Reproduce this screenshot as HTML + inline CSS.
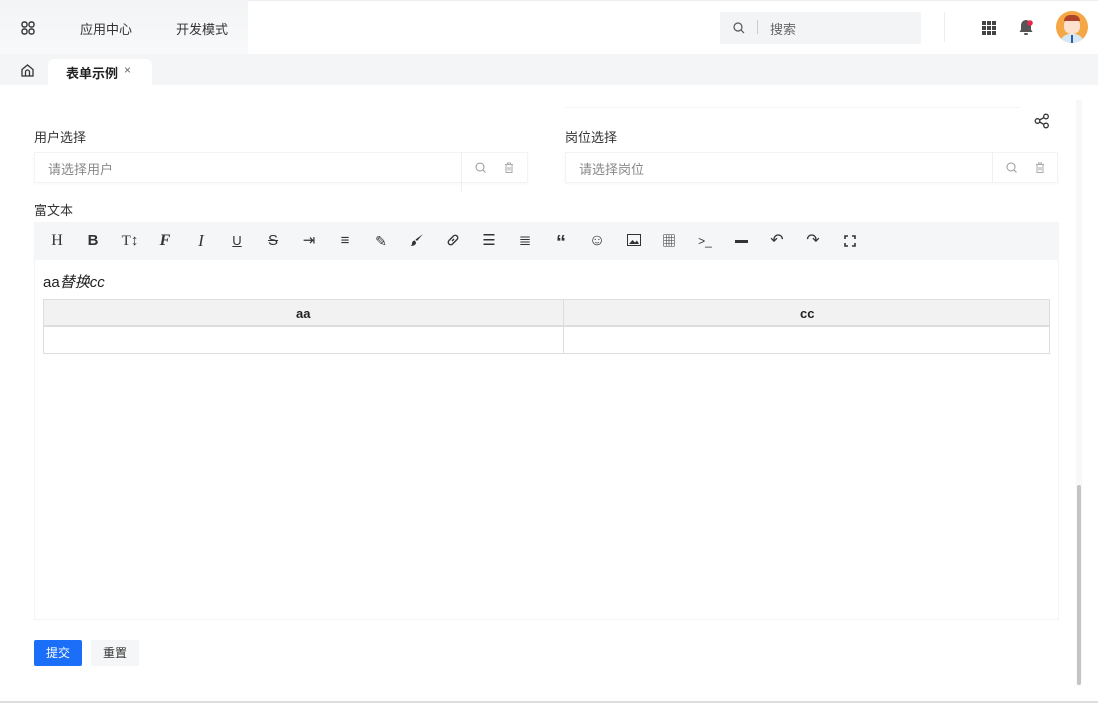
<!DOCTYPE html>
<html><head><meta charset="utf-8"><style>
*{box-sizing:border-box;margin:0;padding:0}
body{width:1098px;height:703px;overflow:hidden;background:#fff;font-family:"Liberation Sans","Noto Sans CJK SC",sans-serif;color:#333;position:relative}
.a{position:absolute}
.t{font-size:13px;color:#333}
.tb{position:absolute;top:232px;width:20px;text-align:center;font-size:14px;color:#333;line-height:18px}
</style></head><body>
<div class="a" style="left:0;top:0;width:1098px;height:54px;background:#fff;border-top:1px solid #eee"></div>
<div class="a" style="left:0;top:0;width:248px;height:54px;background:linear-gradient(#f3f4f5,#f8f9fa)"></div>
<svg class="a" style="left:21px;top:21px" width="14" height="14" viewBox="0 0 14 14" fill="none" stroke="#333" stroke-width="1.4"><rect x="1" y="1" width="5" height="5" rx="2"/><rect x="8" y="1" width="5" height="5" rx="2"/><rect x="1" y="8" width="5" height="5" rx="2"/><rect x="8" y="8" width="5" height="5" rx="2"/></svg>
<div class="a t" style="left:80px;top:19px">应用中心</div>
<div class="a t" style="left:176px;top:19px">开发模式</div>
<div class="a" style="left:720px;top:12px;width:201px;height:32px;background:#f3f4f6;border-radius:2px"></div>
<svg class="a" style="left:733px;top:22px" width="12" height="12" viewBox="0 0 12 12" fill="none" stroke="#555" stroke-width="1.2"><circle cx="5" cy="5" r="4"/><path d="M8 8l3 3"/></svg>
<div class="a" style="left:757px;top:20px;width:1px;height:14px;background:#ccc"></div>
<div class="a t" style="left:770px;top:19px;color:#666">搜索</div>
<div class="a" style="left:944px;top:12px;width:1px;height:30px;background:#eee"></div>
<svg class="a" style="left:982px;top:21px" width="14" height="14" viewBox="0 0 14 14" fill="#444"><rect x="0" y="0" width="4" height="4"/><rect x="5" y="0" width="4" height="4"/><rect x="10" y="0" width="4" height="4"/><rect x="0" y="5" width="4" height="4"/><rect x="5" y="5" width="4" height="4"/><rect x="10" y="5" width="4" height="4"/><rect x="0" y="10" width="4" height="4"/><rect x="5" y="10" width="4" height="4"/><rect x="10" y="10" width="4" height="4"/></svg>
<svg class="a" style="left:1019px;top:19px" width="15" height="17" viewBox="0 0 15 17"><path d="M7 1c-3 0-5 2.5-5 5.5v4L0.5 13h13L12 10.5v-4C12 3.5 10 1 7 1z" fill="#555"/><rect x="5" y="14" width="4" height="2" rx="1" fill="#555"/><circle cx="11" cy="4" r="2.8" fill="#e8284a"/></svg>
<div class="a" style="left:1056px;top:11px;width:32px;height:32px;border-radius:50%;background:#f5a645;overflow:hidden"><div class="a" style="left:8px;top:6px;width:16px;height:17px;border-radius:8px 8px 7px 7px;background:#fde1cd"></div><div class="a" style="left:8px;top:4px;width:16px;height:6px;border-radius:8px 8px 0 0;background:#b0442b"></div><div class="a" style="left:4px;top:23px;width:24px;height:12px;border-radius:10px 10px 0 0;background:#d6e8f7"></div><div class="a" style="left:15px;top:24px;width:2px;height:8px;background:#2b5dab"></div></div>
<div class="a" style="left:0;top:54px;width:1098px;height:31px;background:#f3f5f7"></div>
<svg class="a" style="left:21px;top:64px" width="13" height="13" viewBox="0 0 13 13" fill="none" stroke="#333" stroke-width="1.3"><path d="M1 5.5L6.5 1 12 5.5V12H1z"/><path d="M4.5 12V8a2 2 0 014 0v4"/></svg>
<div class="a" style="left:48px;top:59px;width:104px;height:26px;background:#fff;border-radius:6px 6px 0 0"></div>
<div class="a" style="left:66px;top:63px;font-size:13px;font-weight:bold;color:#222">表单示例</div>
<div class="a" style="left:124px;top:63px;font-size:12px;color:#666">×</div>
<div class="a" style="left:565px;top:100px;width:455px;height:8px;border-bottom:1px solid #f4f4f4"></div>
<svg class="a" style="left:1034px;top:113px" width="16" height="16" viewBox="0 0 16 16" fill="none" stroke="#333" stroke-width="1.3"><circle cx="12" cy="3.5" r="2.3"/><circle cx="3.5" cy="8" r="2.3"/><circle cx="12" cy="12.5" r="2.3"/><path d="M5.6 7l4.3-2.4M5.6 9l4.3 2.4"/></svg>
<div class="a t" style="left:34px;top:127px">用户选择</div>
<div class="a t" style="left:565px;top:127px">岗位选择</div>
<div class="a" style="left:34px;top:152px;width:494px;height:31px;border:1px solid #f2f3f4;box-shadow:0 1px 3px rgba(0,0,0,.04)"></div>
<div class="a" style="left:461px;top:152px;width:1px;height:40px;background:#f0f0f0"></div>
<div class="a t" style="left:48px;top:159px;color:#888">请选择用户</div>
<div class="a" style="left:565px;top:152px;width:493px;height:31px;border:1px solid #f2f3f4;box-shadow:0 1px 3px rgba(0,0,0,.04)"></div>
<div class="a" style="left:992px;top:152px;width:1px;height:31px;background:#f0f0f0"></div>
<div class="a t" style="left:579px;top:159px;color:#888">请选择岗位</div>
<svg class="a" style="left:475px;top:162px" width="11" height="11" viewBox="0 0 11 11" fill="none" stroke="#999" stroke-width="1"><circle cx="5" cy="5" r="4"/><path d="M8 8l2.5 2.5"/></svg>
<svg class="a" style="left:504px;top:162px" width="10" height="11" viewBox="0 0 10 11" fill="none" stroke="#aaa" stroke-width="1"><path d="M1 2.5h8M3.5 2.5V1h3v1.5M2 2.5v8h6v-8M4 5v3.5M6 5v3.5"/></svg>
<svg class="a" style="left:1006px;top:162px" width="11" height="11" viewBox="0 0 11 11" fill="none" stroke="#999" stroke-width="1"><circle cx="5" cy="5" r="4"/><path d="M8 8l2.5 2.5"/></svg>
<svg class="a" style="left:1035px;top:162px" width="10" height="11" viewBox="0 0 10 11" fill="none" stroke="#aaa" stroke-width="1"><path d="M1 2.5h8M3.5 2.5V1h3v1.5M2 2.5v8h6v-8M4 5v3.5M6 5v3.5"/></svg>
<div class="a t" style="left:34px;top:200px">富文本</div>
<div class="a" style="left:34px;top:222px;width:1025px;height:398px;border:1px solid #f3f4f5"></div>
<div class="a" style="left:34px;top:222px;width:1025px;height:38px;background:#f5f6f7"></div>
<div class="tb" style="left:47px;font-family:'Liberation Serif',serif;font-size:16px">H</div>
<div class="tb" style="left:83px;font-weight:bold;font-size:15px">B</div>
<div class="tb" style="left:120px;font-family:'Liberation Serif',serif;font-size:15px">T↕</div>
<div class="tb" style="left:155px;font-family:'Liberation Serif',serif;font-style:italic;font-weight:bold;font-size:16px">F</div>
<div class="tb" style="left:191px;font-family:'Liberation Serif',serif;font-style:italic;font-size:17px">I</div>
<div class="tb" style="left:227px;text-decoration:underline;font-size:13px">U</div>
<div class="tb" style="left:263px;text-decoration:line-through;font-size:15px">S</div>
<div class="tb" style="left:299px;font-size:15px">⇥</div>
<div class="tb" style="left:335px;font-size:15px">≡</div>
<div class="tb" style="left:371px;font-size:14px">✎</div>
<svg class="a" style="left:410px;top:233px" width="14" height="14" viewBox="0 0 14 14"><path d="M13 1L7 8l-1.5-1.5z" fill="#333"/><path d="M5 7.5c-2 0-3 1.5-3 3S1 13 0.5 13c3 0 5.5-1 5.5-3.5z" fill="#333"/></svg>
<svg class="a" style="left:446px;top:233px" width="14" height="14" viewBox="0 0 14 14" fill="none" stroke="#333" stroke-width="1.4"><path d="M6 8l2-2M5 5.5L7.5 3a2.3 2.3 0 013.5 3.5L8.5 9M9 8.5L6.5 11A2.3 2.3 0 013 7.5L5.5 5"/></svg>
<div class="tb" style="left:479px;font-size:15px">☰</div>
<div class="tb" style="left:515px;font-size:15px">≣</div>
<div class="tb" style="left:551px;font-size:20px;font-weight:bold;line-height:22px">“</div>
<div class="tb" style="left:587px;font-size:16px">☺</div>
<svg class="a" style="left:627px;top:234px" width="14" height="12" viewBox="0 0 14 12"><rect x="0.5" y="0.5" width="13" height="11" fill="none" stroke="#333"/><path d="M2 10l3.5-4 2.5 2.5 2-2L12 10z" fill="#333"/></svg>
<div class="tb" style="left:659px;font-size:14px">▦</div>
<div class="tb" style="left:695px;font-size:12px">&gt;_</div>
<div class="a" style="left:735px;top:240px;width:13px;height:3px;background:#333"></div>
<div class="tb" style="left:767px;font-size:16px">↶</div>
<div class="tb" style="left:803px;font-size:16px">↷</div>
<svg class="a" style="left:844px;top:235px" width="12" height="12" viewBox="0 0 12 12" fill="none" stroke="#333" stroke-width="1.6"><path d="M1 4V1h3M8 1h3v3M11 8v3H8M4 11H1V8"/></svg>
<div class="a" style="left:43px;top:271px;font-size:15px;color:#222">aa<i>替换cc</i></div>
<div class="a" style="left:43px;top:299px;width:1007px;height:55px;border:1px solid #ddd"></div>
<div class="a" style="left:44px;top:300px;width:1005px;height:27px;background:#f2f2f2;border-bottom:2px solid #ddd"></div>
<div class="a" style="left:563px;top:299px;width:1px;height:55px;background:#ddd"></div>
<div class="a" style="left:296px;top:306px;font-size:13px;font-weight:bold;color:#222">aa</div>
<div class="a" style="left:800px;top:306px;font-size:13px;font-weight:bold;color:#222">cc</div>
<div class="a" style="left:34px;top:640px;width:48px;height:26px;background:#1a6ef7;border-radius:2px;color:#fff;font-size:12px;text-align:center;line-height:26px">提交</div>
<div class="a" style="left:91px;top:640px;width:48px;height:26px;background:#f5f6f7;border-radius:2px;color:#333;font-size:12px;text-align:center;line-height:26px">重置</div>
<div class="a" style="left:1076px;top:100px;width:6px;height:586px;background:#f8f8f8"></div>
<div class="a" style="left:1077px;top:485px;width:4px;height:200px;background:#c4c4c4;border-radius:2px"></div>
<div class="a" style="left:0;top:701px;width:1098px;height:2px;background:#ddd"></div>
</body></html>
